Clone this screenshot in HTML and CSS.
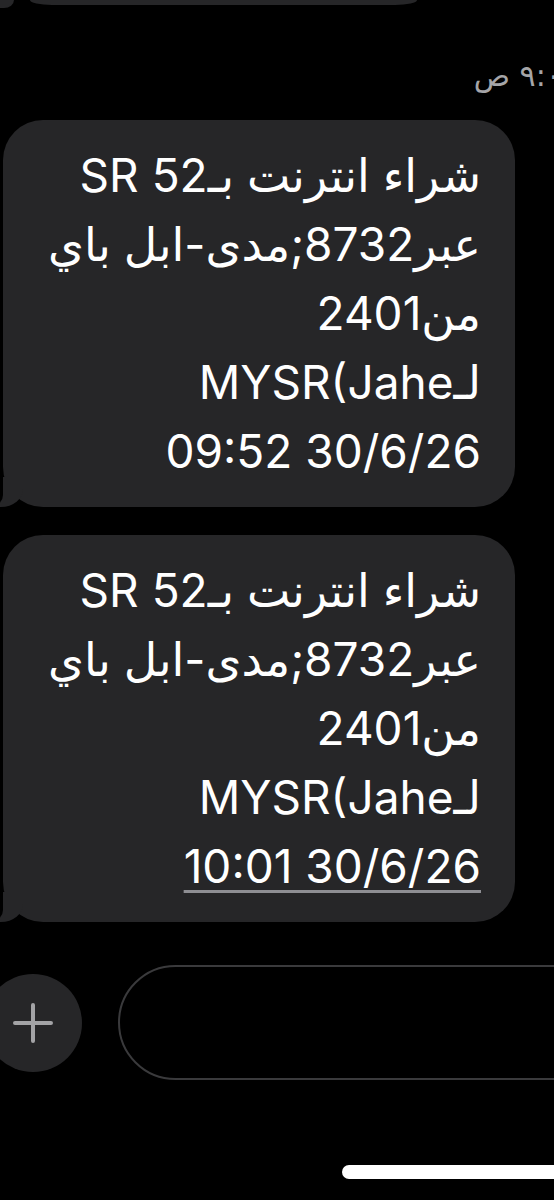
FILE: index.html
```html
<!DOCTYPE html>
<html lang="ar">
<head>
<meta charset="utf-8">
<title>Messages</title>
<link rel="stylesheet" href="styles.css">
</head>
<body>
<div class="screen">
  <div class="prev">
    <span class="prev-tail"></span>
    <span class="prev-bubble"></span>
  </div>
  <div class="stamp" dir="rtl">٩:٠٥ ص</div>

  <div class="bubble" dir="rtl">
    <div class="line">شراء انترنت بـ52 SR</div>
    <div class="line">عبر8732;مدى-ابل باي</div>
    <div class="line">من2401</div>
    <div class="line">لـMYSR(Jahe</div>
    <div class="line"><span dir="ltr">09:52 30/6/26</span></div>
  </div>

  <div class="bubble" dir="rtl">
    <div class="line">شراء انترنت بـ52 SR</div>
    <div class="line">عبر8732;مدى-ابل باي</div>
    <div class="line">من2401</div>
    <div class="line">لـMYSR(Jahe</div>
    <div class="line"><span class="link" dir="ltr">10:01 30/6/26</span></div>
  </div>

  <div class="composer">
    <div class="plus">
      <svg width="40" height="40" viewBox="0 0 40 40" aria-hidden="true">
        <path d="M20 2 V38 M2 20 H38" stroke="#a3a3a6" stroke-width="4" stroke-linecap="round" fill="none"/>
      </svg>
    </div>
    <div class="field"></div>
  </div>

  <div class="home-row"><span class="home"></span></div>
</div>
</body>
</html>
```

FILE: styles.css
```css
html, body {
  margin: 0;
  padding: 0;
  background: #000;
}

.screen {
  width: 554px;
  height: 1200px;
  overflow: hidden;
  background: #000;
  color: #fff;
  font-family: "Inter", "DejaVu Sans", sans-serif;
}

.prev {
  display: flex;
  align-items: flex-start;
  height: 8px;
}

.prev-tail {
  width: 14px;
  height: 8px;
  background: #262628;
  border-bottom-right-radius: 10px 8px;
}

.prev-bubble {
  margin-left: 16px;
  width: 387px;
  height: 5px;
  background: #262628;
  border-radius: 0 0 22px 22px / 0 0 5px 5px;
}

.stamp {
  margin-top: 51px;
  margin-right: -24px;
  height: 34px;
  line-height: 34px;
  font-size: 30px;
  color: #a5a5a8;
  text-align: right;
  white-space: nowrap;
  font-family: "DejaVu Sans", sans-serif;
  margin-bottom: 27px;
}

.bubble {
  position: relative;
  margin-left: 3px;
  width: 512px;
  box-sizing: border-box;
  padding: 21px 34px 21px 20px;
  background: #262628;
  border-radius: 40px;
  font-size: 46px;
  line-height: 69px;
  text-align: right;
}

.bubble + .bubble {
  margin-top: 28px;
}

.bubble::before {
  content: "";
  position: absolute;
  left: -10px;
  bottom: 0;
  width: 30px;
  height: 30px;
  background: #262628;
  border-bottom-right-radius: 22px 18px;
}

.bubble::after {
  content: "";
  position: absolute;
  left: -26px;
  bottom: 0;
  width: 26px;
  height: 32px;
  background: #000;
  border-bottom-right-radius: 14px 12px;
}

.line {
  white-space: nowrap;
}

.link {
  text-decoration: underline;
  text-decoration-color: #8e8e93;
  text-decoration-thickness: 3px;
  text-underline-offset: 7px;
}

.composer {
  margin-top: 43px;
  display: flex;
  align-items: center;
  gap: 36px;
  margin-left: -16px;
}

.plus {
  flex: none;
  width: 98px;
  height: 98px;
  border-radius: 50%;
  background: #262628;
  display: flex;
  align-items: center;
  justify-content: center;
}

.field {
  flex: none;
  width: 520px;
  height: 115px;
  box-sizing: border-box;
  border: 2px solid #3a3a3c;
  border-radius: 58px;
}

.home-row {
  margin-top: 85px;
  padding-left: 342px;
}

.home {
  display: block;
  width: 300px;
  height: 14px;
  background: #fff;
  border-radius: 7px;
}
```
